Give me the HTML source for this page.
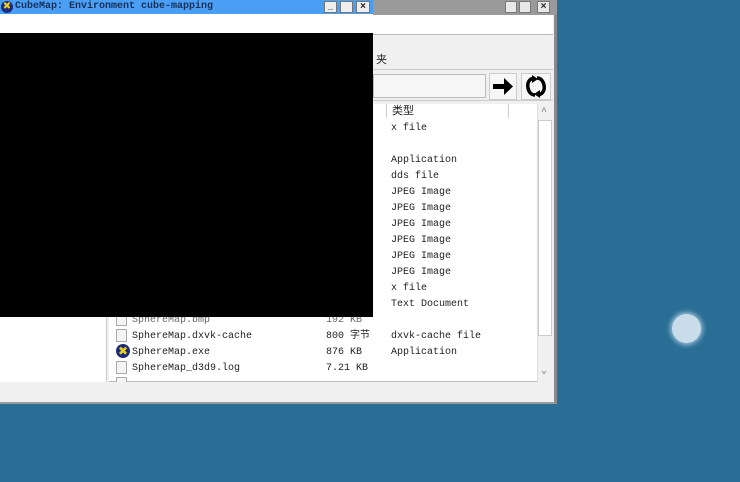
<!DOCTYPE html>
<html><head><meta charset="utf-8"><style>
*{margin:0;padding:0;box-sizing:border-box}
body{width:740px;height:482px;overflow:hidden;background:#2a6e95;position:relative;font-family:"Liberation Mono","Noto Sans CJK SC",monospace;font-size:10px;color:#222}
.a{position:absolute}
.t{position:absolute;white-space:nowrap;font-size:10px;line-height:12px;margin-top:1px}
.ico{position:absolute;width:11px;height:13px;border:1px solid #aaa;background:#f4f4f4}
</style></head><body>
<div class="a" style="left:0;top:0;width:557px;height:404px;background:#f0f0f0;border-right:3px solid #8a8a8a;border-bottom:2px solid #9a9a9a"></div>
<div class="a" style="left:373px;top:0;width:184px;height:15px;background:#9a9a9a"></div>
<div class="a" style="left:505px;top:1px;width:12px;height:12px;background:#e8e8e8;border:1px solid #777"></div>
<div class="a" style="left:519px;top:1px;width:12px;height:12px;background:#e8e8e8;border:1px solid #777"></div>
<div class="a" style="left:537px;top:1px;width:13px;height:12px;background:#e8e8e8;border:1px solid #777;font:bold 10px/10px 'Liberation Sans';text-align:center">×</div>
<div class="a" style="left:373px;top:15px;width:180px;height:19px;background:#fff"></div>
<div class="a" style="left:373px;top:34px;width:180px;height:1px;background:#bbb"></div>
<div class="t" style="left:376px;top:54px;font-size:11px">夹</div>
<div class="a" style="left:373px;top:69px;width:180px;height:1px;background:#ccc"></div>
<div class="a" style="left:373px;top:74px;width:113px;height:24px;background:#f6f6f6;border:1px solid #bbb"></div>
<div class="a" style="left:489px;top:73px;width:28px;height:27px;background:#f7f7f7;border:1px solid #ccc">
<svg width="26" height="25" viewBox="0 0 26 25"><path d="M3 10h11V4l9 8.5-9 8.5v-6H3z" fill="#000"/></svg></div>
<div class="a" style="left:521px;top:73px;width:30px;height:27px;background:#f7f7f7;border:1px solid #ccc">
<svg width="28" height="25" viewBox="0 0 28 25"><path d="M12 4C7 5 5 9 6 14s4 7 7 7" fill="none" stroke="#000" stroke-width="3.5"/><path d="M10 1l6 4-6 4z" fill="#000"/><path d="M16 21c5-1 7-5 6-10s-4-7-7-7" fill="none" stroke="#000" stroke-width="3.5"/><path d="M18 24l-6-4 6-4z" fill="#000"/></svg></div>
<div class="a" style="left:0;top:100px;width:553px;height:1px;background:#ccc"></div>
<div class="a" style="left:0;top:317px;width:107px;height:65px;background:#fff;border-right:1px solid #ccc"></div>
<div class="a" style="left:109px;top:104px;width:444px;height:278px;background:#fff;border-bottom:1px solid #bbb"></div>
<div class="a" style="left:386px;top:104px;width:1px;height:14px;background:#ccc"></div>
<div class="a" style="left:508px;top:104px;width:1px;height:14px;background:#ccc"></div>
<div class="a" style="left:537px;top:104px;width:16px;height:278px;background:#f0f0f0;border-left:1px solid #ddd"></div>
<div class="a" style="left:538px;top:120px;width:14px;height:216px;background:#fff;border:1px solid #ccc"></div>
<div class="t" style="left:541px;top:106px;color:#777">^</div>
<div class="t" style="left:541px;top:365px;color:#777">⌄</div>
<div class="t" style="left:392px;top:105px;font-size:11px">类型</div>
<div class="t" style="left:391px;top:122px">x file</div>
<div class="t" style="left:391px;top:154px">Application</div>
<div class="t" style="left:391px;top:170px">dds file</div>
<div class="t" style="left:391px;top:186px">JPEG Image</div>
<div class="t" style="left:391px;top:202px">JPEG Image</div>
<div class="t" style="left:391px;top:218px">JPEG Image</div>
<div class="t" style="left:391px;top:234px">JPEG Image</div>
<div class="t" style="left:391px;top:250px">JPEG Image</div>
<div class="t" style="left:391px;top:266px">JPEG Image</div>
<div class="t" style="left:391px;top:282px">x file</div>
<div class="t" style="left:391px;top:298px">Text Document</div>
<div class="ico" style="left:116px;top:313px"></div>
<div class="t" style="left:132px;top:314px;color:#666">SphereMap.bmp</div>
<div class="t" style="left:326px;top:314px;color:#666">192 KB</div>
<div class="ico" style="left:116px;top:329px"></div>
<div class="t" style="left:132px;top:330px">SphereMap.dxvk-cache</div>
<div class="t" style="left:326px;top:330px">800 字节</div>
<div class="t" style="left:391px;top:330px">dxvk-cache file</div>
<div class="a" style="left:116px;top:344px;width:14px;height:14px;border-radius:50%;background:#1c2a78;color:#e6d21a;font:bold 12px/14px 'DejaVu Sans';text-align:center">✖</div>
<div class="t" style="left:132px;top:346px">SphereMap.exe</div>
<div class="t" style="left:326px;top:346px">876 KB</div>
<div class="t" style="left:391px;top:346px">Application</div>
<div class="ico" style="left:116px;top:361px"></div>
<div class="t" style="left:132px;top:362px">SphereMap_d3d9.log</div>
<div class="t" style="left:326px;top:362px">7.21 KB</div>
<div class="ico" style="left:116px;top:377px;height:5px;border-bottom:none"></div>
<div class="a" style="left:0;top:0;width:373px;height:14px;background:#4a9ff5"></div>
<div class="a" style="left:1px;top:1px;width:12px;height:12px;border-radius:50%;background:#1c2a78;color:#e6d21a;font:bold 10px/12px 'DejaVu Sans';text-align:center">✖</div>
<div class="t" style="left:15px;top:0px;font-weight:bold;color:#12305a;font-size:10px">CubeMap: Environment cube-mapping</div>
<div class="a" style="left:324px;top:1px;width:13px;height:12px;background:#eee;border:1px solid #777;font:bold 9px/9px 'Liberation Sans';text-align:center">_</div>
<div class="a" style="left:340px;top:1px;width:13px;height:12px;background:#eee;border:1px solid #777"></div>
<div class="a" style="left:356px;top:1px;width:14px;height:12px;background:#eee;border:1px solid #777;font:bold 10px/10px 'Liberation Sans';text-align:center">×</div>
<div class="a" style="left:0;top:14px;width:373px;height:19px;background:#fff"></div>
<div class="a" style="left:0;top:33px;width:373px;height:284px;background:#000"></div>
<div class="a" style="left:672px;top:314px;width:29px;height:29px;border-radius:50%;background:#c8dcea;box-shadow:0 0 5px 2px rgba(220,240,255,.6)"></div>
</body></html>
